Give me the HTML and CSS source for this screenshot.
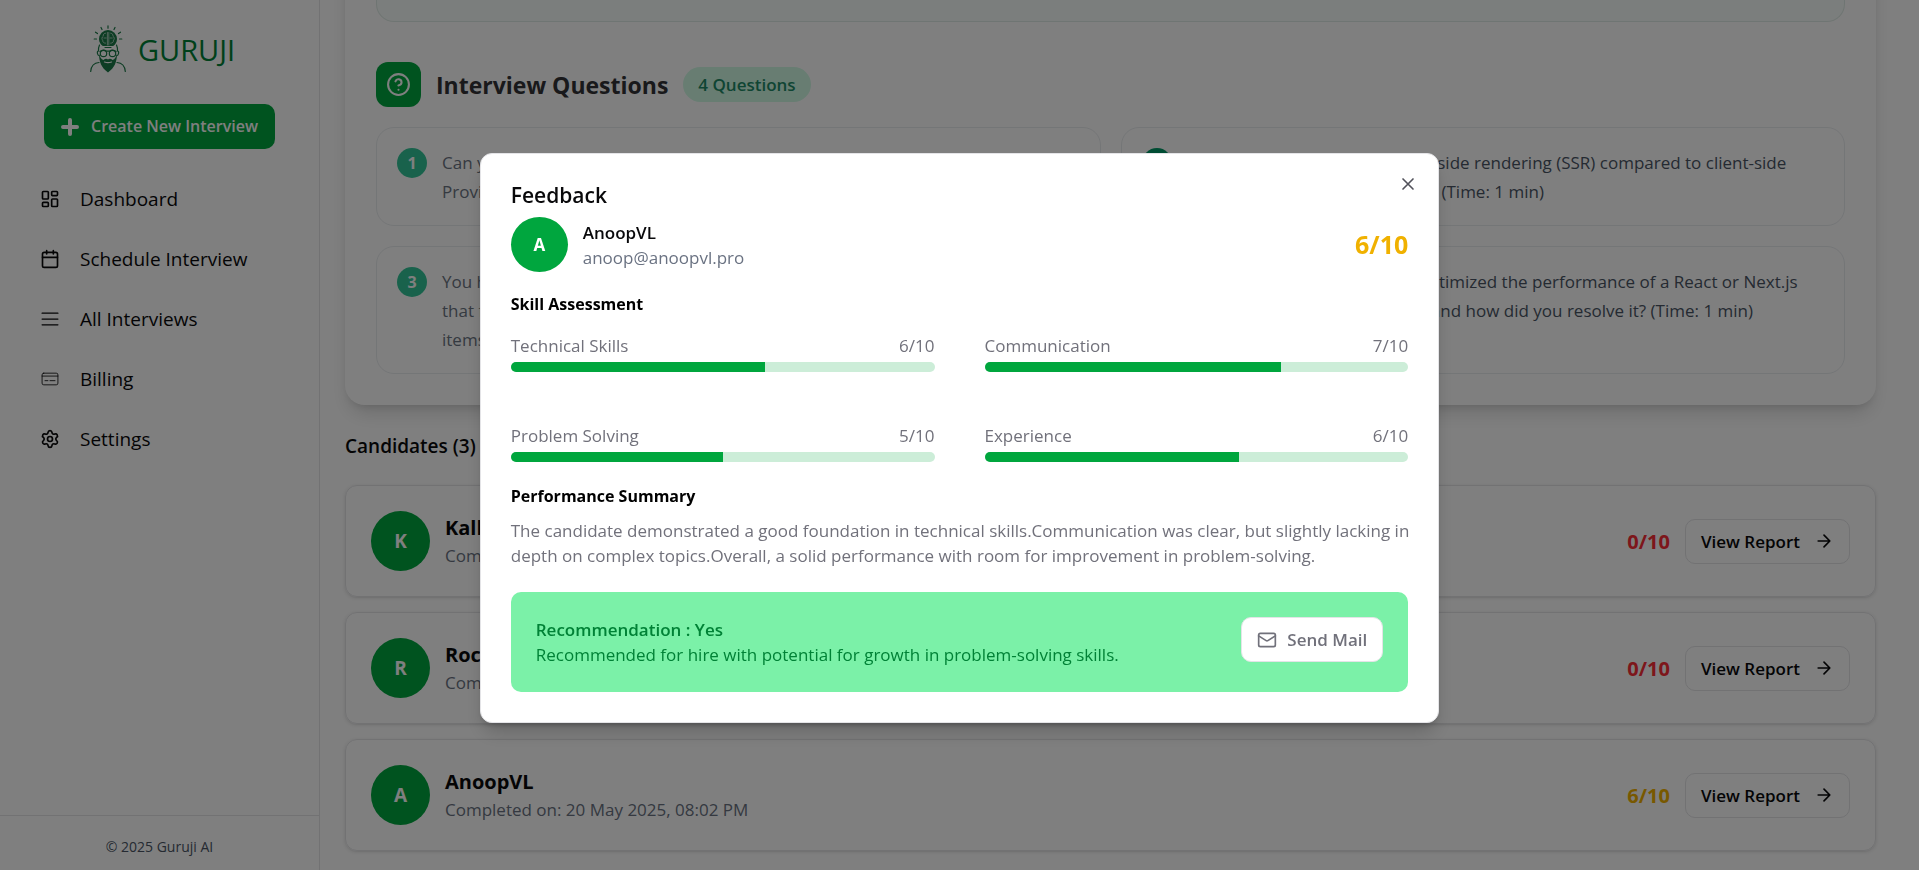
FILE: index.html
```html
<!DOCTYPE html>
<html lang="en">
<head>
<meta charset="utf-8">
<title>Guruji AI</title>
<link rel="stylesheet" href="styles.css">
</head>
<body>
<div class="app">
  <aside class="sidebar">
    <a class="brand" href="#">
      <svg class="brand-mark" viewBox="0 0 36 48" width="36" height="48" fill="none" stroke="currentColor" stroke-width="1.2" stroke-linecap="round">
        <path d="M18 .8v2.4M11 2.5l1 2M25 2.5l-1 2M5.500 7.200l2 1.400M30.500 7.200l-2 1.400M4.200 14h2.300M29.500 14h2.300"/>
        <path d="M18 5a9 9 0 0 0-9 9c0 3 1.500 5.500 3.800 7h10.400c2.300-1.500 3.800-4 3.800-7a9 9 0 0 0-9-9z" fill="currentColor" stroke="none"/>
        <path d="M17.400 7.500v12.500M18.800 7.500v12.500M15.500 8.200c-2 .2-2.500 1.800-2.200 3-1.600.8-1.800 3-.6 4-.2 1.700 1 3 2.800 3M20.700 8.200c2 .2 2.500 1.800 2.200 3 1.600.8 1.800 3 .6 4 .2 1.700-1 3-2.800 3M14 13h2.200M20 13h2.200" stroke="#fff" stroke-width=".6"/>
        <path d="M9.500 20c-.9 2-1.200 4-1 6-1 0-1.400 1-1 2.600.3 1.300.8 2 1.700 2M26.500 20c.9 2 1.200 4 1 6 1 0 1.400 1 1 2.600-.3 1.300-.8 2-1.700 2M15 22.500h6" />
        <path d="M10 26.500c2-1.800 4.500-1.800 6.500-.3h3c2-1.500 4.500-1.500 6.500.3"/>
        <circle cx="13.500" cy="28.500" r="3.200"/><circle cx="22.500" cy="28.500" r="3.200"/>
        <path d="M9 29c.2 8 2.300 13.500 9 18.500 6.700-5 8.800-10.500 9-18.500-1 2.800-2 5.500-4.500 6-1.500-1.500-3.300-1.700-4.500-.5-1.200-1.200-3-1-4.500.5-2.500-.5-3.500-3.200-4.500-6z" fill="currentColor" stroke="none"/>
        <path d="M14.500 37c2.300.8 4.700.8 7 0" stroke="#fff"/>
        <path d="M9 37.500c-4.500.3-7.800 3-8.300 9M27 37.500c4.500.3 7.800 3 8.300 9"/>
      </svg>
      <span class="brand-name">GURUJI</span>
    </a>
    <button class="create" type="button">
      <svg viewBox="0 0 18 18" width="18" height="18" stroke="currentColor" stroke-width="4" stroke-linecap="round"><path d="M9 2v14M2 9h14"/></svg>
      Create New Interview
    </button>
    <nav class="nav">
      <a class="nav-link" href="#"><svg class="icon" viewBox="0 0 24 24"><rect x="3" y="3" width="7" height="9" rx="1"/><rect x="14" y="3" width="7" height="5" rx="1"/><rect x="14" y="12" width="7" height="9" rx="1"/><rect x="3" y="16" width="7" height="5" rx="1"/></svg>Dashboard</a>
      <a class="nav-link" href="#"><svg class="icon" viewBox="0 0 24 24"><path d="M8 2v4M16 2v4"/><rect x="3" y="4" width="18" height="18" rx="2"/><path d="M3 10h18"/></svg>Schedule Interview</a>
      <a class="nav-link" href="#"><svg class="icon icon-list" viewBox="0 0 24 24"><path d="M2.500 5h19M2.500 12h19M2.500 19h19"/></svg>All Interviews</a>
      <a class="nav-link" href="#"><svg class="icon icon-thin" viewBox="0 0 24 24"><rect x="2.500" y="5" width="19" height="14" rx="2"/><path d="M2.500 8.500h19M6 14h3.500M12 14h6"/></svg>Billing</a>
      <a class="nav-link" href="#"><svg class="icon" viewBox="0 0 24 24"><path d="M9.671 4.136a2.340 2.340 0 0 1 4.659 0 2.340 2.340 0 0 0 3.319 1.915 2.340 2.340 0 0 1 2.330 4.033 2.340 2.340 0 0 0 0 3.831 2.340 2.340 0 0 1-2.330 4.033 2.340 2.340 0 0 0-3.319 1.915 2.340 2.340 0 0 1-4.659 0 2.340 2.340 0 0 0-3.320-1.915 2.340 2.340 0 0 1-2.330-4.033 2.340 2.340 0 0 0 0-3.831A2.340 2.340 0 0 1 6.350 6.051a2.340 2.340 0 0 0 3.319-1.915"/><circle cx="12" cy="12" r="3"/></svg>Settings</a>
    </nav>
    <footer class="copyright">© 2025 Guruji AI</footer>
  </aside>

  <main class="main">
    <section class="panel">
      <div class="description"></div>
      <header class="panel-head">
        <span class="panel-icon"><svg class="icon icon-lg" viewBox="0 0 24 24"><circle cx="12" cy="12" r="10"/><path d="M9.090 9a3 3 0 0 1 5.830 1c0 2-3 3-3 3M12 17h.01"/></svg></span>
        <h2 class="panel-title">Interview Questions</h2>
        <span class="pill">4 Questions</span>
      </header>
      <div class="questions">
        <article class="question faded"><span class="number">1</span><p>Can you explain the difference between props and state in React?<br>Provide an example of each. (Time: 1 min)</p></article>
        <article class="question"><span class="number">2</span><p>What are the benefits of server-side rendering (SSR) compared to client-side<br>rendering (CSR) in Next.js apps? (Time: 1 min)</p></article>
        <article class="question faded"><span class="number">3</span><p>You have a list of products. Write a function in JavaScript<br>that filters the list by price and returns only the matching<br>items. (Time: 2 min)</p></article>
        <article class="question"><span class="number">4</span><p>Tell us about a past time you optimized the performance of a React or Next.js<br>app. What was the main issue, and how did you resolve it? (Time: 1 min)</p></article>
      </div>
    </section>

    <h2 class="list-title">Candidates (3)</h2>
    <div class="candidates">
      <article class="candidate">
        <span class="avatar">K</span>
        <div class="who"><h3>Kallan</h3><p>Completed on: 20 May 2025, 07:40 PM</p></div>
        <strong class="score low">0/10</strong>
        <button class="report" type="button">View Report <svg class="icon" viewBox="0 0 24 24"><path d="M5 12h14M12 5l7 7-7 7"/></svg></button>
      </article>
      <article class="candidate">
        <span class="avatar">R</span>
        <div class="who"><h3>Rocky</h3><p>Completed on: 20 May 2025, 07:52 PM</p></div>
        <strong class="score low">0/10</strong>
        <button class="report" type="button">View Report <svg class="icon" viewBox="0 0 24 24"><path d="M5 12h14M12 5l7 7-7 7"/></svg></button>
      </article>
      <article class="candidate">
        <span class="avatar">A</span>
        <div class="who"><h3>AnoopVL</h3><p>Completed on: 20 May 2025, 08:02 PM</p></div>
        <strong class="score">6/10</strong>
        <button class="report" type="button">View Report <svg class="icon" viewBox="0 0 24 24"><path d="M5 12h14M12 5l7 7-7 7"/></svg></button>
      </article>
    </div>
  </main>
</div>

<div class="overlay">
  <section class="modal" role="dialog" aria-modal="true" aria-labelledby="modal-title">
    <button class="close" type="button" aria-label="Close"><svg class="icon" viewBox="0 0 24 24"><path d="M18 6 6 18M6 6l12 12"/></svg></button>
    <h2 class="modal-title" id="modal-title">Feedback</h2>
    <div class="person">
      <span class="avatar avatar-sm">A</span>
      <div class="person-text"><h3>AnoopVL</h3><p>anoop@anoopvl.pro</p></div>
      <strong class="total">6/10</strong>
    </div>
    <h3 class="section-title">Skill Assessment</h3>
    <div class="skills">
      <div class="skill"><div class="skill-row"><span>Technical Skills</span><span>6/10</span></div><div class="track" role="progressbar" aria-label="Technical Skills" aria-valuenow="6" aria-valuemax="10"><div class="fill" style="width:60%"></div></div></div>
      <div class="skill"><div class="skill-row"><span>Communication</span><span>7/10</span></div><div class="track" role="progressbar" aria-label="Communication" aria-valuenow="7" aria-valuemax="10"><div class="fill" style="width:70%"></div></div></div>
      <div class="skill"><div class="skill-row"><span>Problem Solving</span><span>5/10</span></div><div class="track" role="progressbar" aria-label="Problem Solving" aria-valuenow="5" aria-valuemax="10"><div class="fill" style="width:50%"></div></div></div>
      <div class="skill"><div class="skill-row"><span>Experience</span><span>6/10</span></div><div class="track" role="progressbar" aria-label="Experience" aria-valuenow="6" aria-valuemax="10"><div class="fill" style="width:60%"></div></div></div>
    </div>
    <h3 class="section-title">Performance Summary</h3>
    <p class="summary">The candidate demonstrated a good foundation in technical skills.Communication was clear, but slightly lacking in depth on complex topics.Overall, a solid performance with room for improvement in problem-solving.</p>
    <div class="verdict">
      <div><h4>Recommendation : Yes</h4><p>Recommended for hire with potential for growth in problem-solving skills.</p></div>
      <button class="mail" type="button"><svg class="icon" viewBox="0 0 24 24"><rect x="2" y="4" width="20" height="16" rx="2"/><path d="m22 7-8.970 5.700a1.940 1.940 0 0 1-2.060 0L2 7"/></svg>Send Mail</button>
    </div>
  </section>
</div>
</body>
</html>
```

FILE: styles.css
```css
* { box-sizing: border-box; }

body {
  margin: 0;
  height: 100vh;
  overflow: hidden;
  font-family: "Open Sans", "Noto Sans", sans-serif;
  font-size: 17px;
  line-height: 25px;
  color: #09090b;
  background: #fff;
}

h2, h3, h4, p { margin: 0; }
a { color: inherit; text-decoration: none; }
button { font: inherit; color: inherit; cursor: pointer; }

.icon {
  width: 20px;
  height: 20px;
  flex: none;
  fill: none;
  stroke: currentColor;
  stroke-width: 2;
  stroke-linecap: round;
  stroke-linejoin: round;
}
.icon-thin { stroke-width: 1; }
.icon-list { stroke-width: 1.5; }
.icon-lg { width: 25px; height: 25px; }

.app { display: flex; height: 100vh; }

/* Sidebar */
.sidebar {
  flex: none;
  display: flex;
  flex-direction: column;
  width: 320px;
  border-right: 1px solid #e4e4e7;
}
.brand {
  display: flex;
  align-items: center;
  justify-content: center;
  gap: 12px;
  padding: 25px 0 31px 6px;
  color: #1b7a48;
}
.brand-name { padding-top: 2px; font-size: 29px; line-height: 40px; color: #008236; }
.create {
  display: flex;
  align-items: center;
  justify-content: center;
  gap: 12px;
  height: 45px;
  margin: 0 44px;
  padding: 0;
  border: 0;
  border-radius: 10px;
  background: #00a63e;
  color: #fff;
  font-size: 16px;
  font-weight: 600;
  white-space: nowrap;
}
.nav {
  flex: 1;
  display: flex;
  flex-direction: column;
  gap: 20px;
  padding: 30px 40px;
}
.nav-link {
  display: flex;
  align-items: center;
  gap: 20px;
  height: 40px;
  font-size: 19px;
}
.copyright {
  padding: 18px 0 11px;
  border-top: 1px solid #e4e4e7;
  font-size: 14px;
  text-align: center;
  color: #4a5565;
}

/* Interview panel */
.main { flex: 1; min-width: 0; padding: 0 43px 0 25px; }
.panel {
  margin-top: -40px;
  padding: 40px 31px 31px;
  border-radius: 0 0 20px 20px;
  box-shadow: 0 12px 19px -4px rgba(0, 0, 0, .14), 0 4px 8px -4px rgba(0, 0, 0, .14);
}
.description {
  height: 22px;
  border: 1px solid #dfebe6;
  border-top: 0;
  border-radius: 0 0 18px 18px;
  background: #f7fdfa;
}
.panel-head {
  display: flex;
  align-items: center;
  gap: 15px;
  margin: 40px 0 20px;
}
.panel-icon {
  display: grid;
  place-items: center;
  width: 45px;
  height: 45px;
  border-radius: 12px;
  background: #00a63e;
  color: #fff;
}
.panel-title { padding-top: 2px; font-size: 23px; line-height: 35px; font-weight: 700; color: #333336; }
.pill {
  padding: 5px 15px;
  border-radius: 18px;
  background: #d0fae5;
  color: #1f8a67;
  font-weight: 600;
}
.questions { display: grid; grid-template-columns: 1fr 1fr; gap: 20px; }
.question {
  display: flex;
  align-items: flex-start;
  gap: 15px;
  padding: 20px 20px 19px;
  border: 1px solid #e9ecef;
  border-radius: 18px;
  line-height: 29px;
  color: #4a5565;
  white-space: nowrap;
}
.question p { min-width: 0; }
.number {
  flex: none;
  width: 30px;
  height: 30px;
  border-radius: 50%;
  background: #009966;
  color: #fff;
  font-size: 16px;
  font-weight: 700;
  line-height: 30px;
  text-align: center;
}
.faded { color: #6b7482; }
.faded .number { background: #33c598; }

/* Candidates */
.list-title { margin: 27px 0 25px; font-size: 19px; line-height: 28px; font-weight: 600; }
.candidates { display: grid; gap: 15px; }
.candidate {
  display: flex;
  align-items: center;
  gap: 15px;
  height: 112px;
  padding: 0 25px;
  border: 1px solid #e4e4e7;
  border-radius: 12px;
  box-shadow: 0 1px 4px rgba(0, 0, 0, .12), 0 1px 2px -1px rgba(0, 0, 0, .12);
}
.avatar {
  flex: none;
  display: grid;
  place-items: center;
  width: 59px;
  height: 60px;
  border-radius: 50%;
  background: #00a63e;
  color: #fff;
  font-size: 19px;
  font-weight: 700;
}
.who { flex: 1; padding-top: 2px; line-height: 28px; color: #6a7282; }
.who h3 { font-size: 20px; font-weight: 700; color: #09090b; }
.score { font-size: 20px; font-weight: 700; color: #f0b100; }
.score.low { color: #fb2c36; }
.report {
  display: flex;
  align-items: center;
  gap: 14px;
  height: 45px;
  padding: 0 15px;
  border: 1px solid #e4e4e7;
  border-radius: 10px;
  background: #fff;
  font-weight: 600;
}

/* Feedback modal */
.overlay {
  position: fixed;
  inset: 0;
  display: flex;
  align-items: center;
  justify-content: center;
  padding-top: 6px;
  background: rgba(0, 0, 0, .5);
}
.modal {
  position: relative;
  width: 50%;
  min-width: 900px;
  padding: 30px;
  border: 1px solid #e4e4e7;
  border-radius: 12px;
  background: #fff;
  box-shadow: 0 12px 19px -4px rgba(0, 0, 0, .2), 0 4px 8px -4px rgba(0, 0, 0, .2);
}
.close {
  position: absolute;
  top: 20px;
  right: 20px;
  display: flex;
  padding: 0;
  border: 0;
  background: none;
  color: #52525b;
}
.modal-title { font-size: 21px; line-height: 23px; font-weight: 600; }
.person { display: flex; align-items: center; gap: 15px; margin: 10px 0 20px; }
.avatar-sm { width: 57px; height: 55px; font-size: 17px; }
.person-text { flex: 1; color: #6a7282; }
.person-text h3 { font-size: 17px; font-weight: 600; color: #09090b; }
.total { font-size: 25px; font-weight: 700; color: #f0b100; }
.section-title { font-size: 16px; font-weight: 700; color: #000; }
.skills {
  display: grid;
  grid-template-columns: 1fr 1fr;
  gap: 51px 50px;
  margin: 16px 0 22px;
  color: #71717b;
}
.skill-row { display: flex; justify-content: space-between; margin-bottom: 4px; }
.track { height: 10px; border-radius: 5px; background: #ccedd8; overflow: hidden; }
.fill { height: 10px; background: #00a63e; }
.summary { margin: 9px -8px 24px 0; color: #71717b; }
.verdict {
  display: flex;
  align-items: flex-start;
  justify-content: space-between;
  gap: 20px;
  padding: 25px;
  border-radius: 10px;
  background: #7bf1a8;
  color: #008236;
}
.verdict h4 { font-size: 17px; font-weight: 600; }
.mail {
  display: flex;
  align-items: center;
  gap: 10px;
  height: 45px;
  padding: 0 15px;
  border: 1px solid #e4e4e7;
  border-radius: 10px;
  background: #fff;
  color: #71717b;
  font-weight: 600;
}
```
